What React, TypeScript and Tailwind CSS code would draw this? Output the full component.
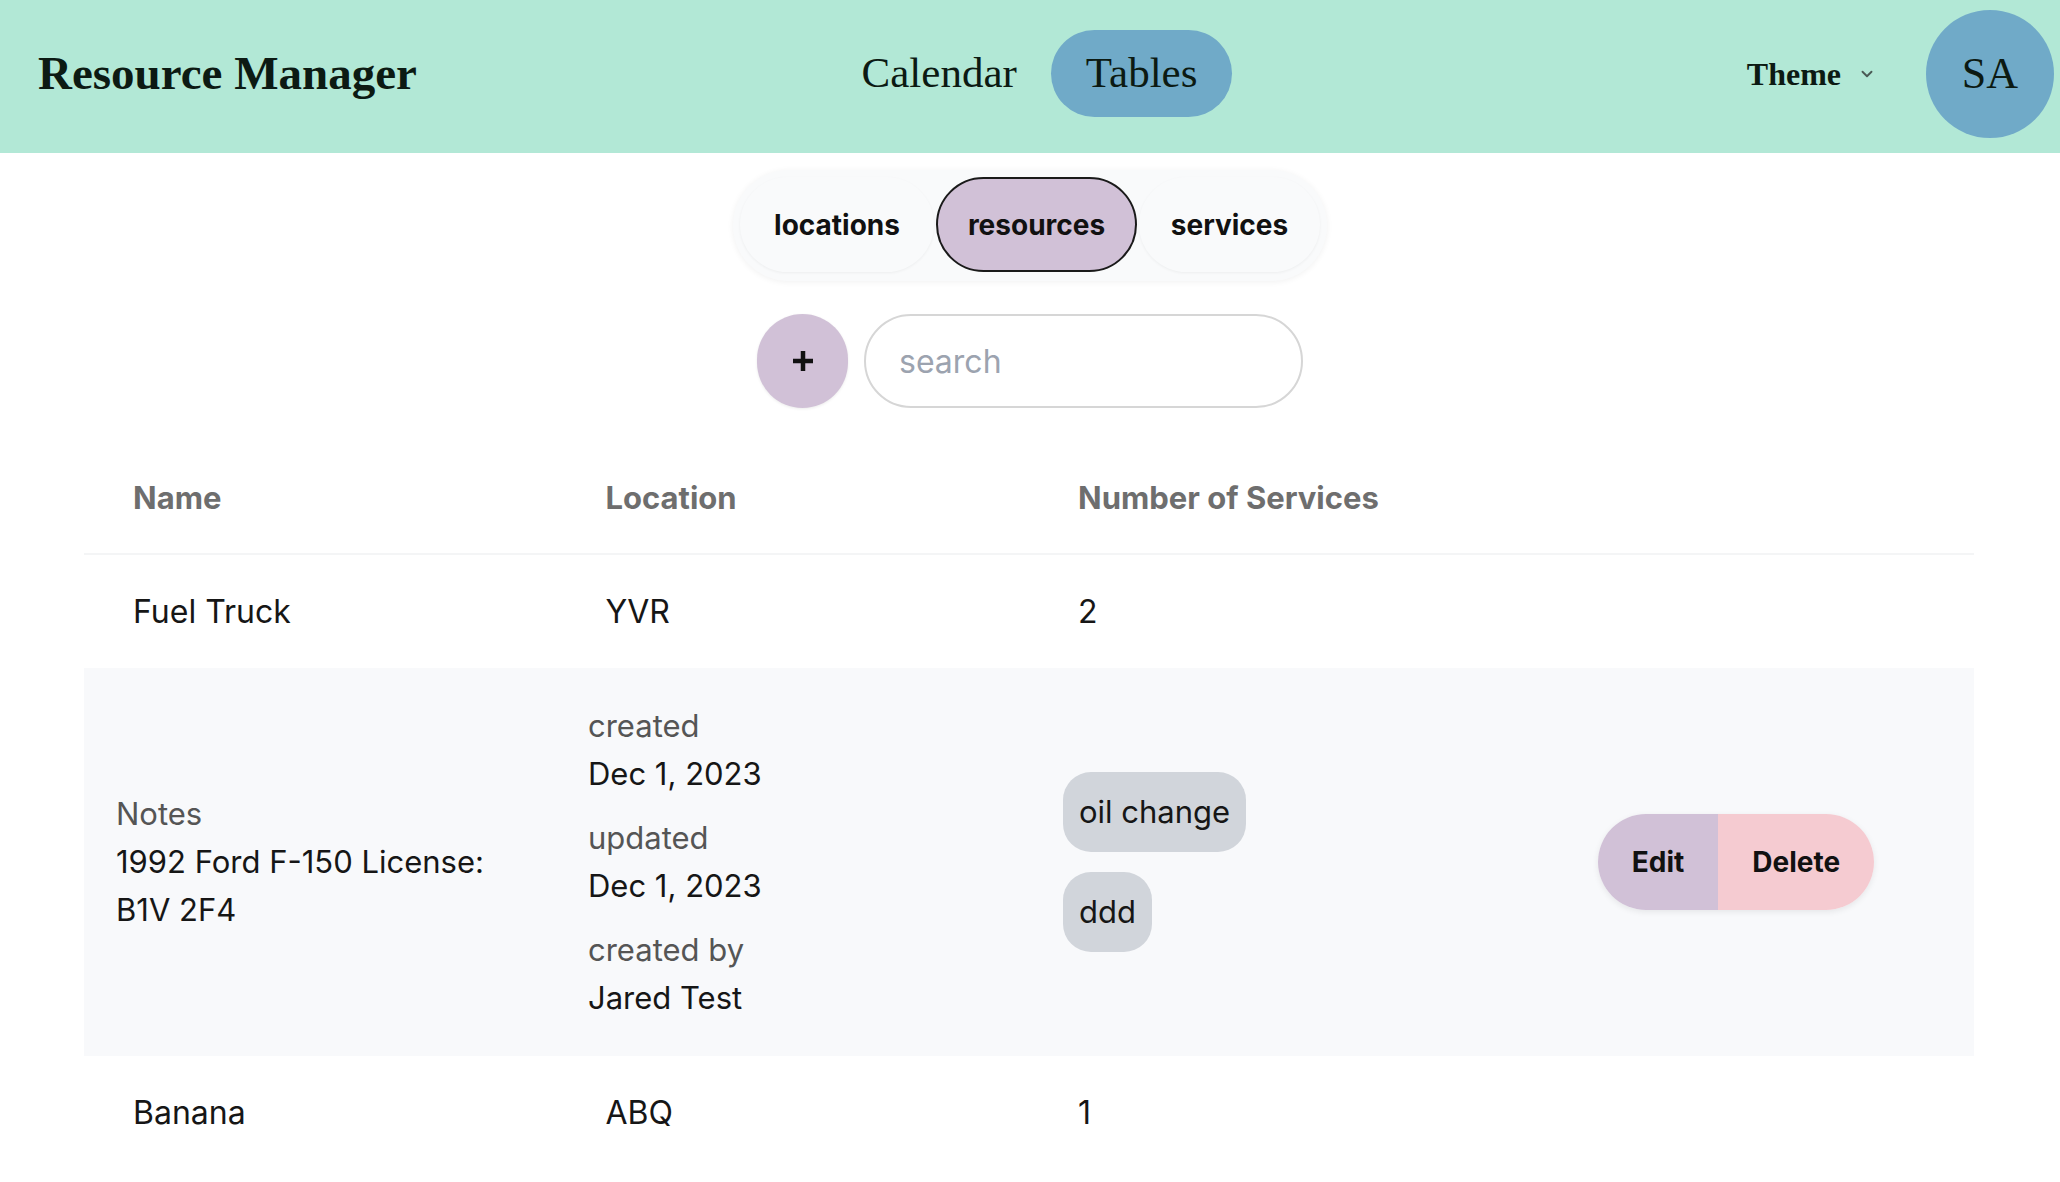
import React from 'react';
import { ChevronDown } from 'lucide-react';

const rows = [
  { name: 'Fuel Truck', location: 'YVR', services: 2, open: true },
  { name: 'Banana', location: 'ABQ', services: 1, open: false },
];

function Header() {
  return (
    <header className="h-[153px] bg-[#b2e8d6] flex items-center justify-between pb-[6px] pl-[38px] pr-[6px] font-['Liberation_Serif',serif] text-[#0c1a13]">
      <h1 className="w-[520px] text-[47px] font-bold leading-none">Resource Manager</h1>

      <nav className="flex items-center">
        <a className="h-[87px] px-[34px] flex items-center rounded-full text-[43px]">Calendar</a>
        <a className="h-[87px] px-[35px] flex items-center rounded-full text-[43px] bg-[#70aac8]">Tables</a>
      </nav>

      <div className="w-[552px] flex items-center justify-end">
        <button className="flex items-center gap-[17px] text-[32px] font-bold">
          Theme
          <ChevronDown className="w-[18px] h-[18px] text-[#4a5a55]" strokeWidth={2.5} />
        </button>
        <div className="ml-[50px] w-[128px] h-[128px] rounded-full bg-[#70aac8] flex items-center justify-center text-[44px]">
          SA
        </div>
      </div>
    </header>
  );
}

function Tabs() {
  const tabs = ['locations', 'resources', 'services'];
  return (
    <div className="flex justify-center pt-[17px]">
      <div className="flex items-center gap-[2px] p-[7px] pb-[9px] rounded-full bg-gray-50 shadow-[0_1px_6px_rgba(0,0,0,0.06)]">
        {tabs.map((t) => (
          <button
            key={t}
            className={
              t === 'resources'
                ? 'h-[95px] w-[201px] rounded-full border-2 border-[#1a1a1a] bg-[#d1c1d7] text-[28px] font-bold text-[#111]'
                : t === 'locations'
                ? 'h-[95px] w-[194px] rounded-full bg-gray-50 shadow-[0_1px_3px_rgba(0,0,0,0.05)] text-[28px] font-bold text-[#111]'
                : 'h-[95px] w-[181px] rounded-full bg-gray-50 shadow-[0_1px_3px_rgba(0,0,0,0.05)] text-[28px] font-bold text-[#111]'
            }
          >
            {t}
          </button>
        ))}
      </div>
    </div>
  );
}

function Toolbar() {
  return (
    <div className="flex justify-center items-center gap-[16px] mt-[33px]">
      <button className="w-[91px] h-[94px] rounded-full bg-[#d1c1d7] flex items-center justify-center shadow-[0_1px_3px_rgba(0,0,0,0.08)]">
        <svg width="22" height="22" viewBox="0 0 22 22">
          <path d="M11 1v20M1 11h20" stroke="#111" strokeWidth="4.5" />
        </svg>
      </button>
      <input
        placeholder="search"
        className="w-[439px] h-[94px] rounded-full border-2 border-[#d6d6d6] px-[33px] text-[32px] placeholder:text-[#9ca3af] outline-none"
      />
    </div>
  );
}

function Detail({ label, value }: { label: string; value: string }) {
  return (
    <div className="flex flex-col leading-[48px]">
      <span className="text-[#555]">{label}</span>
      <span className="text-[#161616]">{value}</span>
    </div>
  );
}

function ExpandedRow() {
  return (
    <div className="bg-[#f8f9fb] grid grid-cols-[474px_474px_474px_1fr] items-center px-[32px] py-[34px] text-[31px]">
      <div className="flex flex-col leading-[48px]">
        <span className="text-[#555]">Notes</span>
        <span className="text-[#161616] w-[400px]">1992 Ford F-150 License: B1V 2F4</span>
      </div>
      <div className="flex flex-col gap-[16px] -ml-[2px]">
        <Detail label="created" value="Dec 1, 2023" />
        <Detail label="updated" value="Dec 1, 2023" />
        <Detail label="created by" value="Jared Test" />
      </div>
      <div className="flex flex-col items-start gap-[20px] -ml-[1px]">
        <span className="px-[16px] py-[16px] leading-[48px] rounded-[28px] bg-[#d1d5db] text-[#161616]">oil change</span>
        <span className="px-[16px] py-[16px] leading-[48px] rounded-[28px] bg-[#d1d5db] text-[#161616]">ddd</span>
      </div>
      <div className="flex justify-center -ml-[8px]">
        <div className="flex rounded-full overflow-hidden shadow-[0_2px_6px_rgba(0,0,0,0.08)] text-[28px] font-bold text-[#111]">
          <button className="h-[96px] px-[34px] bg-[#d1c1d7]">Edit</button>
          <button className="h-[96px] px-[34px] bg-[#f5cbd1]">Delete</button>
        </div>
      </div>
    </div>
  );
}

function ResourceTable() {
  return (
    <div className="ml-[84px] w-[1890px] mt-[35px]">
      <div className="grid grid-cols-4 h-[112px] items-center border-b-2 border-[#f4f5f6] text-[31px] font-bold text-[#6e6e6e]">
        <span className="pl-[49px]">Name</span>
        <span className="pl-[49px]">Location</span>
        <span className="pl-[49px]">Number of Services</span>
        <span />
      </div>
      {rows.map((r) => (
        <React.Fragment key={r.name}>
          <div className="grid grid-cols-4 h-[113px] items-center text-[32px] text-[#161616]">
            <span className="pl-[49px]">{r.name}</span>
            <span className="pl-[49px]">{r.location}</span>
            <span className="pl-[49px]">{r.services}</span>
            <span />
          </div>
          {r.open && <ExpandedRow />}
        </React.Fragment>
      ))}
    </div>
  );
}

export default function App() {
  return (
    <div className="min-h-[1182px] bg-white font-['Inter',sans-serif]">
      <Header />
      <Tabs />
      <Toolbar />
      <ResourceTable />
    </div>
  );
}
